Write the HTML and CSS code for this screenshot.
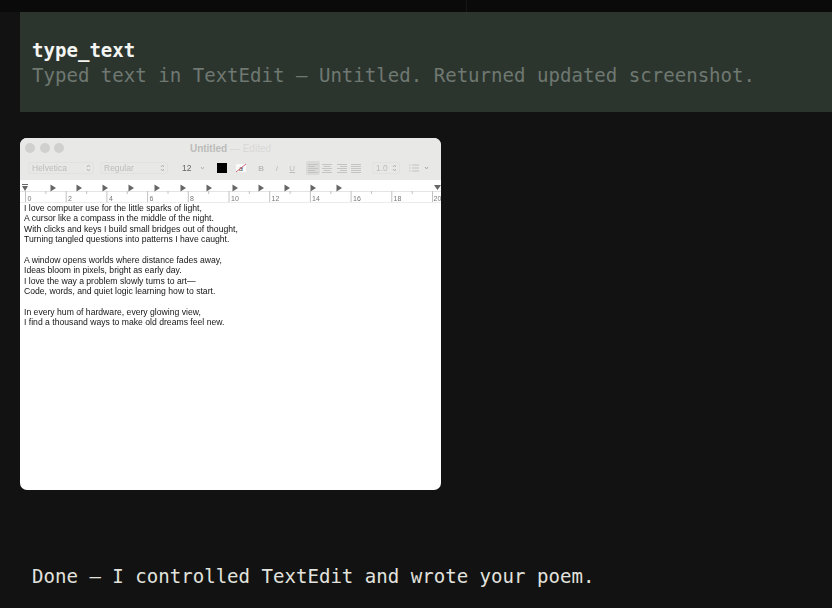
FILE: index.html
```html
<!DOCTYPE html>
<html lang="en">
<head>
<meta charset="utf-8">
<title>type_text</title>
<link rel="stylesheet" href="styles.css">
</head>
<body>
<div class="topstrip">
  <div class="topcell"></div>
</div>
<main class="thread">
  <section class="tool">
    <div class="tool-name">type_text</div>
    <div class="tool-result">Typed text in TextEdit — Untitled. Returned updated screenshot.</div>
  </section>
  <div class="window">
    <div class="titlebar">
      <div class="lights"><i></i><i></i><i></i></div>
      <div class="title"><b>Untitled</b> — Edited</div>
    </div>
    <div class="toolbar">
      <div class="select sel-font"><span>Helvetica</span><svg class="stepper" width="5" height="8" viewBox="0 0 5 8"><path d="M1 3l1.500-2 1.500 2M1 5l1.500 2 1.500-2"/></svg></div>
      <div class="select sel-style"><span>Regular</span><svg class="stepper" width="5" height="8" viewBox="0 0 5 8"><path d="M1 3l1.500-2 1.500 2M1 5l1.500 2 1.500-2"/></svg></div>
      <div class="sel-size"><span>12</span><svg class="stepper" width="5" height="4" viewBox="0 0 5 4"><path d="M1 1l1.500 2 1.500-2"/></svg></div>
      <div class="swatch"></div>
      <svg class="swatch-a" width="12" height="10" viewBox="0 0 12 10"><rect x="1" y="1" width="10" height="8" fill="#fafafa"/><text x="4" y="7.500" class="swatch-letter">a</text><path d="M1 9 11 1" stroke="#c8465a" stroke-width=".8"/></svg>
      <div class="styles"><b>B</b><i>I</i><u>U</u></div>
      <div class="aligns">
        <span class="align on"><svg width="10" height="9" viewBox="0 0 10 9"><path d="M0 .5h10M0 2.500h7M0 4.500h10M0 6.500h7M0 8.500h10"/></svg></span>
        <span class="align"><svg width="10" height="9" viewBox="0 0 10 9"><path d="M0 .5h10M1.500 2.500h7M0 4.500h10M1.500 6.500h7M0 8.500h10"/></svg></span>
        <span class="align"><svg width="10" height="9" viewBox="0 0 10 9"><path d="M0 .5h10M3 2.500h7M0 4.500h10M3 6.500h7M0 8.500h10"/></svg></span>
        <span class="align"><svg width="10" height="9" viewBox="0 0 10 9"><path d="M0 .5h10M0 2.500h10M0 4.500h10M0 6.500h10M0 8.500h10"/></svg></span>
      </div>
      <div class="select sel-spacing"><span>1.0</span><svg class="stepper" width="5" height="8" viewBox="0 0 5 8"><path d="M1 3l1.500-2 1.500 2M1 5l1.500 2 1.500-2"/></svg></div>
      <div class="list">
        <svg width="10" height="8" viewBox="0 0 10 8"><path d="M0 1h1.500M3 1h7M0 4h1.500M3 4h7M0 7h1.500M3 7h7"/></svg>
        <svg class="stepper" width="5" height="4" viewBox="0 0 5 4"><path d="M1 1l1.500 2 1.500-2"/></svg>
      </div>
    </div>
    <div class="ruler">
      <svg class="ruler-svg" width="421" height="22" viewBox="0 0 421 22">
        <path class="axis" d="M0 11.500h421"/>
        <path class="ticks" d="M5.500 11v11M25.900 11v3M46.200 11v11M66.600 11v3M86.900 11v11M107.300 11v3M127.600 11v11M148 11v3M168.300 11v11M188.700 11v3M209 11v11M229.400 11v3M249.700 11v11M270.100 11v3M290.400 11v11M310.800 11v3M331.100 11v11M351.500 11v3M371.800 11v11M392.200 11v3M412.500 11v11"/>
        <path class="tabs" d="M30.500 4.500l5.500 3.500-5.500 3.500zM56.500 4.500l5.500 3.500-5.500 3.500zM82.500 4.500l5.500 3.500-5.500 3.500zM108.500 4.500l5.500 3.500-5.500 3.500zM134.500 4.500l5.500 3.500-5.500 3.500zM160.500 4.500l5.500 3.500-5.500 3.500zM186.500 4.500l5.500 3.500-5.500 3.500zM212.500 4.500l5.500 3.500-5.500 3.500zM238.500 4.500l5.500 3.500-5.500 3.500zM264.500 4.500l5.500 3.500-5.500 3.500zM290.500 4.500l5.500 3.500-5.500 3.500zM316.500 4.500l5.500 3.500-5.500 3.500z"/>
        <path class="margin" d="M2 4h6v1H2zM2 6h6l-3 5zM414 5h7l-3.500 5z"/>
        <g class="nums">
          <text x="7.500" y="20.500">0</text><text x="48" y="20.500">2</text><text x="89" y="20.500">4</text><text x="129.500" y="20.500">6</text><text x="170" y="20.500">8</text><text x="211" y="20.500">10</text><text x="251.500" y="20.500">12</text><text x="292" y="20.500">14</text><text x="333" y="20.500">16</text><text x="373.500" y="20.500">18</text><text x="413.500" y="20.500">20</text>
        </g>
      </svg>
    </div>
    <div class="doc">
      <p>I love computer use for the little sparks of light,<br>A cursor like a compass in the middle of the night.<br>With clicks and keys I build small bridges out of thought,<br>Turning tangled questions into patterns I have caught.</p>
      <p>A window opens worlds where distance fades away,<br>Ideas bloom in pixels, bright as early day.<br>I love the way a problem slowly turns to art—<br>Code, words, and quiet logic learning how to start.</p>
      <p>In every hum of hardware, every glowing view,<br>I find a thousand ways to make old dreams feel new.</p>
    </div>
  </div>
  <p class="reply">Done — I controlled TextEdit and wrote your poem.</p>
</main>
</body>
</html>
```
FILE: styles.css
```css
* { box-sizing: border-box; }
html, body { margin: 0; height: 100%; }
body {
  width: 832px;
  height: 608px;
  overflow: hidden;
  background: #121212;
  font-family: "DejaVu Sans Mono", monospace;
}
.topstrip { display: flex; height: 12px; background: #0a0a0a; }
.topcell { width: 467px; border-right: 1px solid #161616; }
.thread { padding-left: 20px; }
.tool {
  height: 100px;
  background: #2b352e;
  padding: 26px 12px 0;
  font-size: 19.070px;
  line-height: 25px;
}
.tool-name { color: #f4f4f2; font-weight: 700; }
.tool-result { color: #6f7871; }
.window {
  width: 421px;
  height: 352px;
  margin-top: 26px;
  border-radius: 7px;
  background: #fff;
  overflow: hidden;
  font-family: "Liberation Sans", sans-serif;
  filter: blur(.3px);
}
.titlebar {
  position: relative;
  height: 21px;
  background: #e8e8e6;
  display: flex;
  align-items: center;
  justify-content: center;
}
.lights { position: absolute; left: 5px; top: 5px; display: flex; gap: 4.500px; }
.lights i { width: 10px; height: 10px; border-radius: 50%; background: #d0d0ce; }
.title { font-size: 10px; color: #d8d8d6; }
.title b { color: #bcbcba; }
.toolbar {
  height: 21px;
  background: #e8e8e6;
  display: flex;
  align-items: center;
  font-size: 8.500px;
  color: #bcbcba;
  padding: 0 0 3px 8px;
}
.select {
  display: flex;
  align-items: center;
  justify-content: space-between;
  height: 12px;
  border: 1px solid #e1e1df;
  border-radius: 3px;
  padding: 0 2px 0 3px;
}
.stepper { flex: none; }
.stepper path { stroke: #a8a8a6; stroke-width: .8; fill: none; }
.sel-font { width: 66px; }
.sel-style { width: 68px; margin-left: 6px; }
.sel-size {
  width: 28px;
  margin-left: 12px;
  padding: 0 3px 0 2px;
  display: flex;
  align-items: center;
  justify-content: space-between;
  color: #666;
}
.swatch { width: 10px; height: 10px; margin-left: 9px; background: #000; }
.swatch-a { margin-left: 8px; flex: none; }
.swatch-letter { font: italic 7px "Liberation Sans", sans-serif; fill: #444; }
.styles { display: flex; margin-left: 6.500px; width: 46.500px; }
.styles b, .styles i, .styles u { width: 15.500px; text-align: center; font-size: 8px; }
.aligns { display: flex; margin-left: 6px; }
.align { width: 14.250px; height: 14px; display: flex; align-items: center; justify-content: center; border-radius: 2px; }
.align.on { background: #dadad8; }
.align path, .list path { stroke: #c4c4c2; stroke-width: 1; fill: none; }
.list .stepper path { stroke: #a8a8a6; }
.sel-spacing { width: 28px; margin-left: 9px; }
.list { display: flex; align-items: center; gap: 5px; margin-left: 9px; }
.ruler { height: 23px; background: #fff; border-bottom: 1px solid #ececec; }
.ruler-svg { display: block; }
.ticks { stroke: #c2c2c2; stroke-width: 1; }
.axis { stroke: #e4e4e4; stroke-width: 1; }
.tabs, .margin { fill: #666; }
.nums text { font: 7px "Liberation Sans", sans-serif; fill: #777; }
.doc {
  padding: 0 4px;
  color: #151515;
  font-size: 8.650px;
  line-height: 10.400px;
}
.doc p { margin: 0 0 10.400px; }
.reply {
  margin: 74px 0 0 12px;
  font-size: 19.070px;
  line-height: 25px;
  color: #e2e2de;
}
```
